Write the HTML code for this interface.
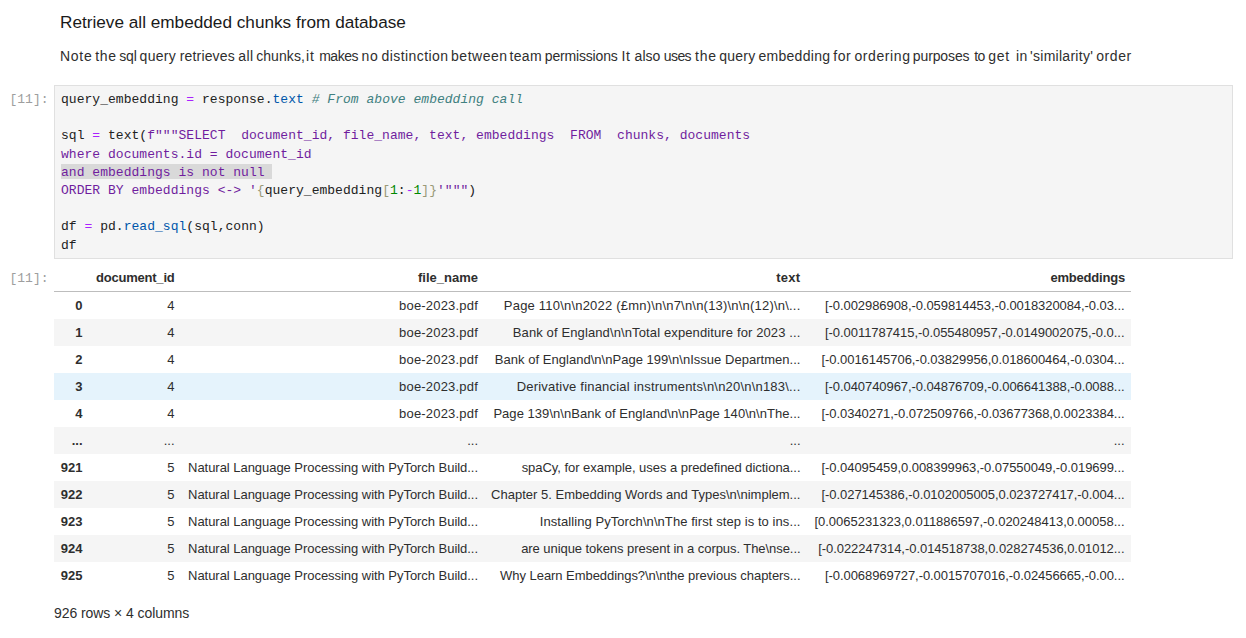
<!DOCTYPE html>
<html><head><meta charset="utf-8">
<style>
html,body{margin:0;padding:0;background:#fff;width:1246px;height:638px;overflow:hidden;position:relative;}
body{font-family:"Liberation Sans",sans-serif;color:rgba(0,0,0,0.87);}
.abs{position:absolute;white-space:pre;}
#h{left:60px;top:11px;font-size:17.2px;line-height:22px;color:#1a1a1a;}
#p{left:0px;top:46px;font-size:14px;line-height:20px;color:#2e2e2e;}
.prompt{font-family:"Liberation Mono",monospace;font-size:13px;color:#9e9e9e;line-height:18.2px;}
#cell{left:54px;top:85px;width:1177px;height:172px;background:#f5f5f5;border:1px solid #e0e0e0;}
#code{left:61px;top:91px;font-family:"Liberation Mono",monospace;font-size:13px;line-height:18.2px;color:#212121;letter-spacing:0.03px;}
.sel{background:#d9d9d9;}
.op{color:#aa22ff;}
.pr{color:#0055aa;}
.cm{color:#408080;font-style:italic;}
.s2{color:#701d9e;}
.br{color:#999977;}
.nm{color:#008800;}
#tbl{left:54px;top:258px;width:1077px;font-size:13px;color:#2e2e2e;}
.row{position:absolute;left:0;width:1077px;height:27px;}
.row span{position:absolute;top:0;line-height:27px;text-align:right;white-space:pre;}
.hd span{font-weight:bold;}
.c0{left:0;width:28.5px;font-weight:bold;}
.c1{left:34.5px;width:86px;}
.c2{left:127px;width:297px;}
.c3{left:430px;width:316.5px;}
.c4{left:752.5px;width:318px;}
.odd{background:#f5f5f5;}
.hov{background:#e5f3fc;}
#foot{left:54px;top:603px;font-size:14px;line-height:20px;letter-spacing:-0.07px;color:#2e2e2e;}
</style></head><body>
<div id="h" class="abs">Retrieve all embedded chunks from database</div>
<div id="p" class="abs"><span style="position:absolute;left:60.00px;top:0;letter-spacing:0.700px">Note</span><span style="position:absolute;left:95.20px;top:0;letter-spacing:0.750px">the</span><span style="position:absolute;left:119.20px;top:0;letter-spacing:-0.150px">sql</span><span style="position:absolute;left:139.60px;top:0;letter-spacing:0.275px">query</span><span style="position:absolute;left:179.80px;top:0;letter-spacing:0.150px">retrieves</span><span style="position:absolute;left:238.20px;top:0;letter-spacing:0.500px">all</span><span style="position:absolute;left:256.20px;top:0;letter-spacing:0.067px">chunks,</span><span style="position:absolute;left:306.00px;top:0;letter-spacing:0.800px">it</span><span style="position:absolute;left:319.20px;top:0;letter-spacing:-0.475px">makes</span><span style="position:absolute;left:361.40px;top:0;letter-spacing:0.800px">no</span><span style="position:absolute;left:381.60px;top:0;letter-spacing:0.420px">distinction</span><span style="position:absolute;left:451.00px;top:0;letter-spacing:0.533px">between</span><span style="position:absolute;left:509.40px;top:0;letter-spacing:0.400px">team</span><span style="position:absolute;left:544.80px;top:0;letter-spacing:-0.170px">permissions</span><span style="position:absolute;left:621.40px;top:0;letter-spacing:0.800px">It</span><span style="position:absolute;left:634.60px;top:0;letter-spacing:0.033px">also</span><span style="position:absolute;left:663.80px;top:0;letter-spacing:-0.600px">uses</span><span style="position:absolute;left:695.00px;top:0;letter-spacing:0.800px">the</span><span style="position:absolute;left:719.20px;top:0;letter-spacing:0.275px">query</span><span style="position:absolute;left:758.40px;top:0;letter-spacing:0.300px">embedding</span><span style="position:absolute;left:833.20px;top:0;letter-spacing:0.550px">for</span><span style="position:absolute;left:854.40px;top:0;letter-spacing:0.600px">ordering</span><span style="position:absolute;left:912.80px;top:0;letter-spacing:-0.114px">purposes</span><span style="position:absolute;left:974.20px;top:0;letter-spacing:-0.600px">to</span><span style="position:absolute;left:988.20px;top:0;letter-spacing:0.800px">get</span><span style="position:absolute;left:1016.00px;top:0;letter-spacing:0.500px">in</span><span style="position:absolute;left:1030.00px;top:0;letter-spacing:0.282px">'similarity'</span><span style="position:absolute;left:1096.20px;top:0;letter-spacing:0.600px">order</span></div>
<div class="abs prompt" style="left:9.5px;top:91px;">[11]:</div>
<div id="cell" class="abs"></div>
<div class="abs" style="left:61px;top:164px;width:211px;height:15px;background:#d9d9d9;"></div>
<div id="code" class="abs">query_embedding <span class="op">=</span> response.<span class="pr">text</span> <span class="cm"># From above embedding call</span>

sql <span class="op">=</span> text(<span class="s2">f"""SELECT  document_id, file_name, text, embeddings  FROM  chunks, documents</span>
<span class="s2">where documents.id = document_id</span>
<span class="s2">and embeddings is not null </span>
<span class="s2">ORDER BY embeddings &lt;-&gt; '</span><span class="br">{</span>query_embedding<span class="br">[</span><span class="nm">1</span>:<span class="op">-</span><span class="nm">1</span><span class="br">]</span><span class="br">}</span><span class="s2">'"""</span>)

df <span class="op">=</span> pd.<span class="pr">read_sql</span>(sql,conn)
df</div>
<div class="abs prompt" style="left:9.5px;top:270px;">[11]:</div>
<div id="tbl" class="abs">
<div class="row hd" style="top:6px;height:27px;"><span class="c1" style="letter-spacing:-0.22px">document_id</span><span class="c2">file_name</span><span class="c3" style="letter-spacing:0.3px">text</span><span class="c4" style="letter-spacing:-0.2px;left:753px">embeddings</span></div>
<div style="position:absolute;left:0;top:33px;width:1077px;height:1px;background:#bdbdbd;"></div>
<!--ROWS-->
<div class="row" style="top:34px;"><span class="c0">0</span><span class="c1">4</span><span class="c2" style="letter-spacing:0.192px">boe-2023.pdf</span><span class="c3" style="letter-spacing:0.204px">Page 110\n\n2022 (£mn)\n\n7\n\n(13)\n\n(12)\n\...</span><span class="c4" style="letter-spacing:-0.069px">[-0.002986908,-0.059814453,-0.0018320084,-0.03...</span></div>
<div class="row odd" style="top:61px;"><span class="c0">1</span><span class="c1">4</span><span class="c2" style="letter-spacing:0.192px">boe-2023.pdf</span><span class="c3" style="letter-spacing:0.120px">Bank of England\n\nTotal expenditure for 2023 ...</span><span class="c4" style="letter-spacing:-0.049px">[-0.0011787415,-0.055480957,-0.0149002075,-0.0...</span></div>
<div class="row" style="top:88px;"><span class="c0">2</span><span class="c1">4</span><span class="c2" style="letter-spacing:0.192px">boe-2023.pdf</span><span class="c3" style="letter-spacing:0.029px">Bank of England\n\nPage 199\n\nIssue Departmen...</span><span class="c4" style="letter-spacing:-0.057px">[-0.0016145706,-0.03829956,0.018600464,-0.0304...</span></div>
<div class="row hov" style="top:115px;"><span class="c0">3</span><span class="c1">4</span><span class="c2" style="letter-spacing:0.192px">boe-2023.pdf</span><span class="c3" style="letter-spacing:0.202px">Derivative financial instruments\n\n20\n\n183\...</span><span class="c4" style="letter-spacing:-0.069px">[-0.040740967,-0.04876709,-0.006641388,-0.0088...</span></div>
<div class="row" style="top:142px;"><span class="c0">4</span><span class="c1">4</span><span class="c2" style="letter-spacing:0.192px">boe-2023.pdf</span><span class="c3" style="letter-spacing:0.043px">Page 139\n\nBank of England\n\nPage 140\n\nThe...</span><span class="c4" style="letter-spacing:-0.057px">[-0.0340271,-0.072509766,-0.03677368,0.0023384...</span></div>
<div class="row odd" style="top:169px;"><span class="c0">...</span><span class="c1">...</span><span class="c2">...</span><span class="c3">...</span><span class="c4">...</span></div>
<div class="row" style="top:196px;"><span class="c0">921</span><span class="c1">5</span><span class="c2" style="letter-spacing:-0.041px">Natural Language Processing with PyTorch Build...</span><span class="c3" style="letter-spacing:-0.041px">spaCy, for example, uses a predefined dictiona...</span><span class="c4" style="letter-spacing:-0.057px">[-0.04095459,0.008399963,-0.07550049,-0.019699...</span></div>
<div class="row odd" style="top:223px;"><span class="c0">922</span><span class="c1">5</span><span class="c2" style="letter-spacing:-0.041px">Natural Language Processing with PyTorch Build...</span><span class="c3" style="letter-spacing:0.014px">Chapter 5. Embedding Words and Types\n\nimplem...</span><span class="c4" style="letter-spacing:-0.057px">[-0.027145386,-0.0102005005,0.023727417,-0.004...</span></div>
<div class="row" style="top:250px;"><span class="c0">923</span><span class="c1">5</span><span class="c2" style="letter-spacing:-0.041px">Natural Language Processing with PyTorch Build...</span><span class="c3" style="letter-spacing:0.073px">Installing PyTorch\n\nThe first step is to ins...</span><span class="c4" style="letter-spacing:-0.010px">[0.0065231323,0.011886597,-0.020248413,0.00058...</span></div>
<div class="row odd" style="top:277px;"><span class="c0">924</span><span class="c1">5</span><span class="c2" style="letter-spacing:-0.041px">Natural Language Processing with PyTorch Build...</span><span class="c3" style="letter-spacing:-0.061px">are unique tokens present in a corpus. The\nse...</span><span class="c4" style="letter-spacing:-0.047px">[-0.022247314,-0.014518738,0.028274536,0.01012...</span></div>
<div class="row" style="top:304px;"><span class="c0">925</span><span class="c1">5</span><span class="c2" style="letter-spacing:-0.041px">Natural Language Processing with PyTorch Build...</span><span class="c3" style="letter-spacing:-0.049px">Why Learn Embeddings?\n\nthe previous chapters...</span><span class="c4" style="letter-spacing:-0.069px">[-0.0068969727,-0.0015707016,-0.02456665,-0.00...</span></div>
<!--/ROWS-->
</div>
<div id="foot" class="abs">926 rows × 4 columns</div>
</body></html>
